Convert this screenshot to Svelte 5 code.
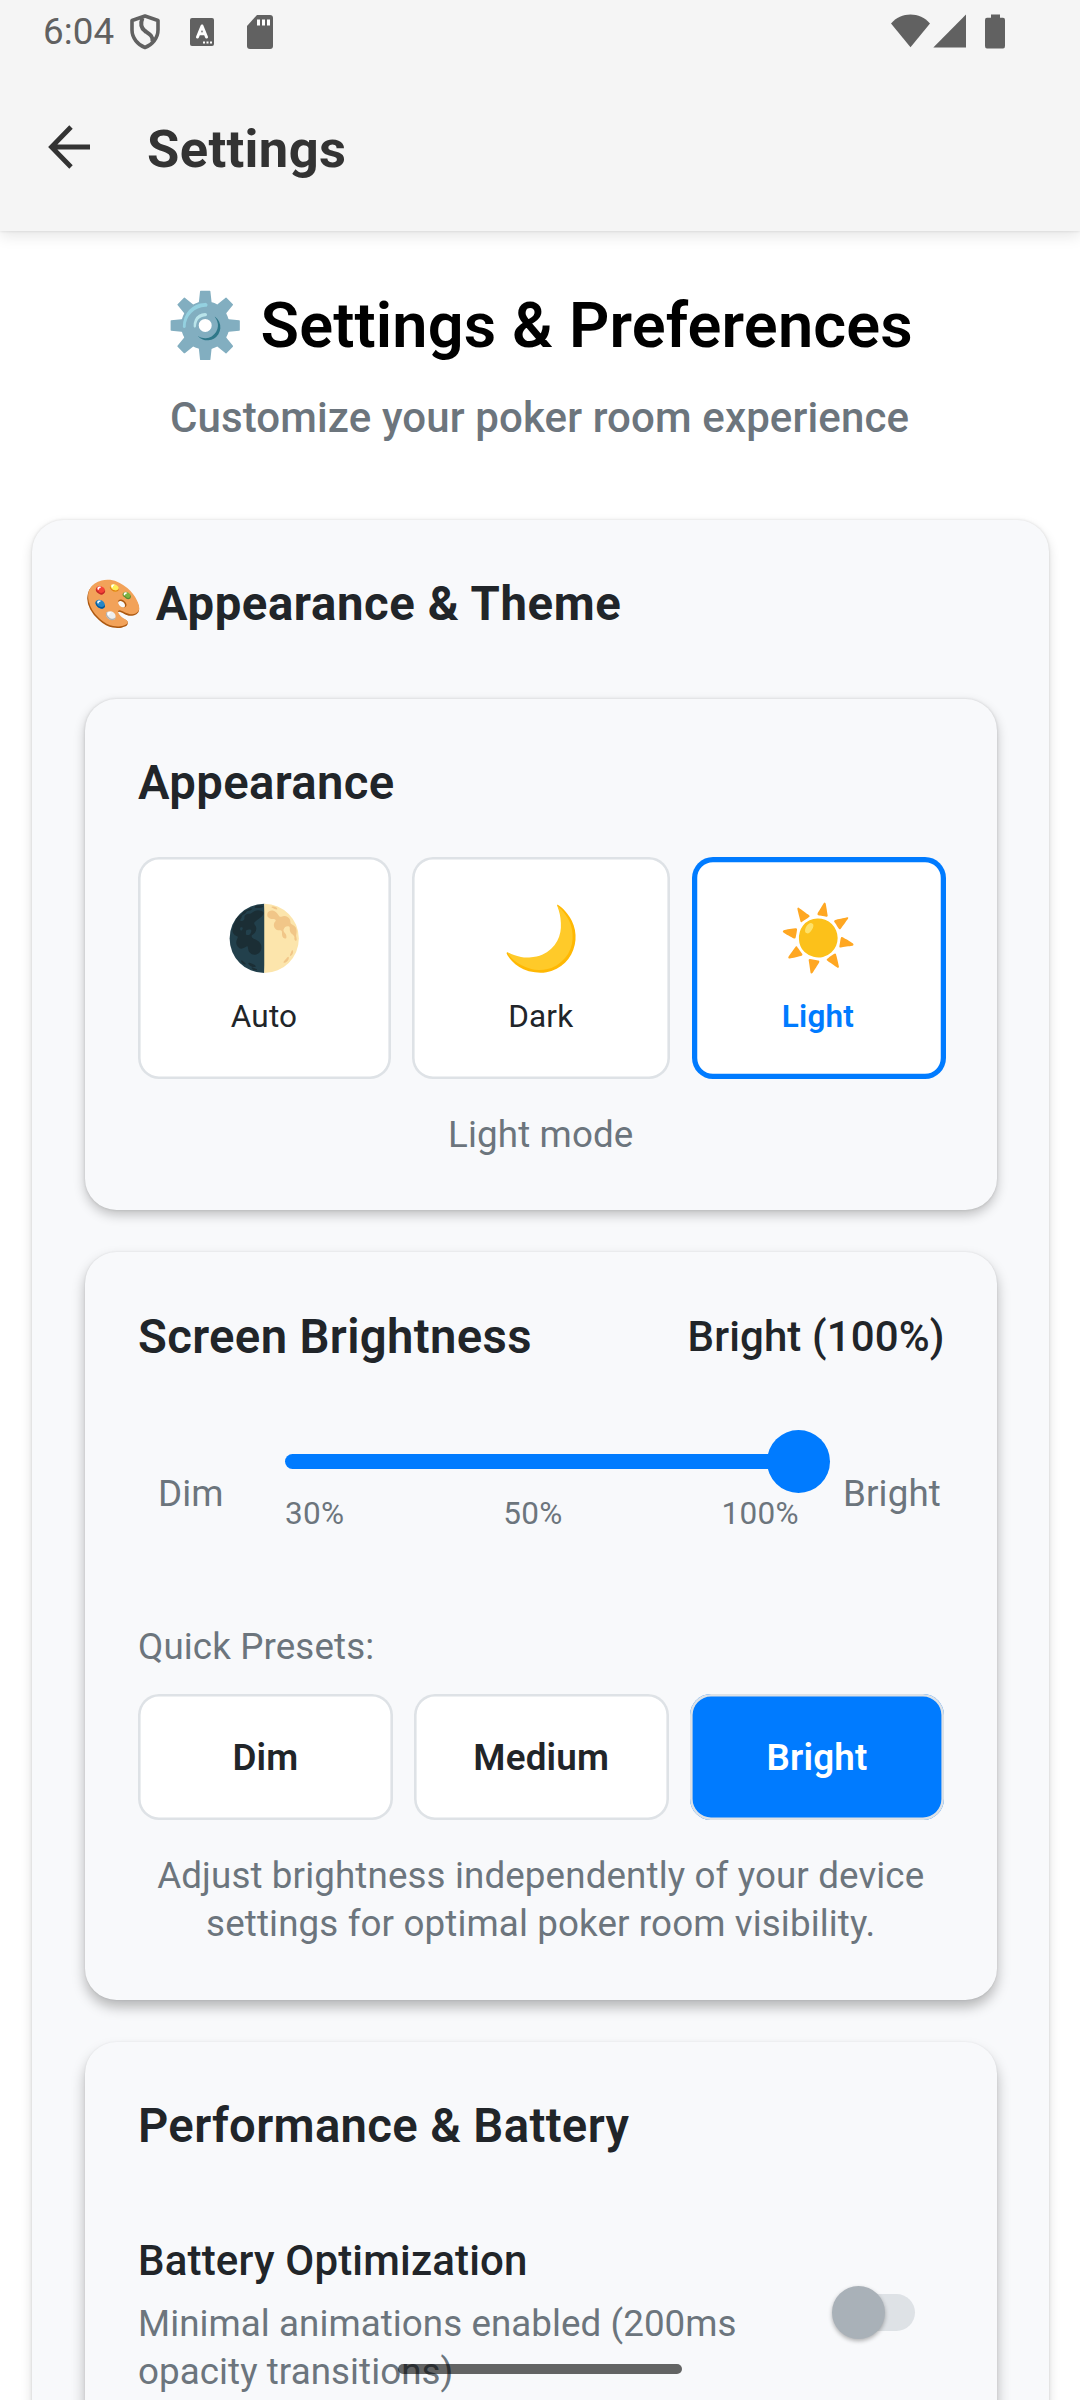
<script>
  const modes = [
    { label: 'Auto', icon: '🌓' },
    { label: 'Dark', icon: '🌙' },
    { label: 'Light', icon: '☀️' }
  ];
  const presets = ['Dim', 'Medium', 'Bright'];
  let mode = $state('Light');
  let preset = $state('Bright');
</script>

<div class="screen">
  <header>
    <div class="status">
      <span class="clock">6:04</span>
      <svg class="shield" viewBox="0 0 30 36" width="30" height="36">
        <path d="M15 2 L28 6.5 V16 C28 24 22 31 15 33.5 C8 31 2 24 2 16 V6.5 Z" fill="none" stroke="#616161" stroke-width="3.6" stroke-linejoin="round" />
        <path d="M12.5 4 C10 10 11 14 15 17 C20 20.500 23 22 22.500 27.500" fill="none" stroke="#616161" stroke-width="4" />
      </svg>
      <svg class="letter" viewBox="0 0 24 28" width="24" height="28">
        <rect width="24" height="28" rx="2" fill="#616161" />
        <path d="M7.500 19 L12 8 L16.500 19 M9 15.800 H15" fill="none" stroke="#fff" stroke-width="3" stroke-linecap="round" stroke-linejoin="round" />
        <path d="M13 23.500h2v2h-2z M16.500 23.500h2v2h-2z M20 23.500h2v2h-2z" fill="#fff" />
      </svg>
      <svg class="card-icon" viewBox="0 0 26 34" width="26" height="34">
        <path d="M10 0 H23 Q26 0 26 3 V31 Q26 34 23 34 H3 Q0 34 0 31 V11 Z" fill="#616161" />
        <path d="M10 4.500h3v6h-3z M15 4.500h3v6h-3z M20 4.500h3v6h-3z" fill="#fff" />
      </svg>
      <svg class="signals" viewBox="0 0 115 36" width="115" height="36">
        <path d="M0 9.500 C10 -2.500 29 -2.500 39 9.500 L19.500 33.300 Z" fill="#616161" />
        <path d="M42.300 33.500 L75 0.500 V33.500 Z" fill="#616161" />
        <path d="M100 0.500 H109 V3.800 H112 Q114 3.800 114 6 V32 Q114 34.500 112 34.500 H96 Q94 34.500 94 32 V6 Q94 3.800 96 3.800 H100 Z" fill="#616161" />
      </svg>
    </div>
    <div class="toolbar">
      <svg viewBox="0 0 42 44" width="42" height="44">
        <path d="M42 22 H4 M23 2 L3.500 22 L23 42" fill="none" stroke="#333" stroke-width="4.800" />
      </svg>
      <h1>Settings</h1>
    </div>
  </header>

  <main>
    <h2><span class="emoji">⚙️</span> Settings &amp; Preferences</h2>
    <p class="subtitle">Customize your poker room experience</p>

    <section class="group">
      <h3 class="group-title"><span class="emoji">🎨</span> Appearance &amp; Theme</h3>

      <div class="card first">
        <h3>Appearance</h3>
        <div class="modes">
          {#each modes as m}
            <button class="mode" class:active={mode === m.label} onclick={() => (mode = m.label)}>
              <span class="mode-icon">{m.icon}</span>
              <span class="mode-label">{m.label}</span>
            </button>
          {/each}
        </div>
        <p class="mode-note">{mode} mode</p>
      </div>

      <div class="card second">
        <div class="card-head">
          <h3>Screen Brightness</h3>
          <span class="value">Bright (100%)</span>
        </div>
        <div class="slider-row">
          <span class="end dim">Dim</span>
          <div class="slider">
            <div class="rail"><div class="track"></div><div class="thumb"></div></div>
            <div class="ticks"><span>30%</span><span>50%</span><span>100%</span></div>
          </div>
          <span class="end">Bright</span>
        </div>
        <p class="presets-label">Quick Presets:</p>
        <div class="presets">
          {#each presets as p}
            <button class="preset" class:active={preset === p} onclick={() => (preset = p)}>{p}</button>
          {/each}
        </div>
        <p class="hint">Adjust brightness independently of your device<br />settings for optimal poker room visibility.</p>
      </div>

      <div class="card third">
        <h3>Performance &amp; Battery</h3>
        <div class="setting">
          <div>
            <p class="setting-name">Battery Optimization</p>
            <p class="setting-desc">Minimal animations enabled (200ms<br />opacity transitions)</p>
          </div>
          <div class="switch"><div class="knob"></div></div>
        </div>
      </div>
    </section>
  </main>
  <div class="gesture"></div>
</div>

<style>
  :global(body) { margin: 0; background: #fff; }
  .screen {
    position: relative;
    width: 1080px;
    height: 2400px;
    overflow: hidden;
    background: #fff;
    color: #212529;
    font-family: Roboto, 'Noto Color Emoji', sans-serif;
    letter-spacing: 0.12px;
  }
  h1, h2, h3, p { margin: 0; }
  button { font-family: inherit; letter-spacing: 0.2px; border: 0; padding: 0; color: inherit; }

  header {
    height: 231px;
    background: #f5f5f5;
    box-shadow: 0 0 3px rgba(0, 0, 0, 0.12), 0 5px 14px rgba(0, 0, 0, 0.1);
  }
  .status { display: flex; height: 63px; padding-left: 43px; align-items: flex-start; }
  .clock { width: 86.500px; font-size: 36.75px; line-height: 63px; color: #616161; }
  .shield { margin-top: 13.500px; }
  .letter { margin: 18px 0 0 30px; }
  .card-icon { margin: 15px 0 0 33px; }
  .signals { margin: 13.500px 0 0 618px; }
  .toolbar { display: flex; align-items: center; height: 168px; padding-left: 48px; }
  h1 { margin: 3px 0 0 57px; font-size: 52.5px; line-height: 60px; font-weight: 700; letter-spacing: 0.35px; color: #333; }

  h2 { margin-top: 57.500px; text-align: center; font-size: 63px; line-height: 74px; font-weight: 600; letter-spacing: 0.15px; color: #000; }
  h2 .emoji { margin-left: -1px; }
  .subtitle { margin: 30px 1px 0 0; text-align: center; font-size: 42px; line-height: 50px; font-weight: 500; color: #6c757d; }

  .group {
    height: 1960px;
    margin: 77px 31px 0 31.5px;
    padding: 56px 52.5px 0 53.5px;
    border-radius: 31.5px;
    background: #f8f9fb;
    box-shadow: 0 0 3px rgba(0, 0, 0, 0.13), 0 5px 12px rgba(0, 0, 0, 0.14);
  }
  h3 { font-size: 47.25px; line-height: 56px; font-weight: 600; letter-spacing: 0.35px; }
  .group-title { margin-left: -1px; font-weight: 700; letter-spacing: 0.62px; }
  .card {
    box-sizing: border-box;
    margin-bottom: 42px;
    padding: 56px 52px 0 53px;
    border-radius: 31.5px;
    background: #f8f9fb;
  }
  .first { height: 511px; margin-top: 67.500px; box-shadow: 0 0 3px rgba(0, 0, 0, 0.13), 0 5px 12px rgba(0, 0, 0, 0.23); }
  .second { height: 748px; padding-top: 57px; box-shadow: 0 0 2px rgba(0, 0, 0, 0.1), 0 7px 13px rgba(0, 0, 0, 0.28); }
  .third { height: 640px; box-shadow: 0 0 2px rgba(0, 0, 0, 0.08), 0 9px 14px rgba(0, 0, 0, 0.28); }

  .modes { display: grid; grid-template-columns: 253px 258px 254px; justify-content: space-between; margin: 46px -1px 0 0; }
  .mode {
    display: flex;
    flex-direction: column;
    align-items: center;
    height: 222px;
    padding-top: 45px;
    border-radius: 21px;
    background: #fff;
    box-shadow: inset 0 0 0 2.600px #dee2e6;
  }
  .mode.active { box-shadow: inset 0 0 0 5.250px #007bff; }
  .mode-icon { height: 74px; font-size: 63px; line-height: 74px; }
  .mode-label { margin: 22px 1px 0 0; font-size: 31.5px; line-height: 38px; }
  .active .mode-label { font-weight: 600; color: #007bff; }
  .mode-note { margin: 34px 1px 0 0; text-align: center; font-size: 36.75px; line-height: 44px; color: #6c757d; }

  .card-head { display: flex; justify-content: space-between; align-items: center; }
  .value { font-size: 42px; line-height: 56px; font-weight: 500; }
  .slider-row { display: flex; height: 102px; margin-top: 65px; }
  .end { padding-top: 42px; font-size: 36.75px; line-height: 44px; color: #6c757d; }
  .dim { width: 127px; padding-left: 20px; }
  .slider { width: 513px; margin-right: 45px; }
  .rail { position: relative; display: flex; align-items: center; height: 63px; }
  .track { width: 100%; height: 15px; border-radius: 8px; background: #007bff; }
  .thumb { position: absolute; right: -31.500px; width: 63px; height: 63px; border-radius: 50%; background: #007bff; }
  .ticks { display: flex; justify-content: space-between; margin-right: -1px; padding-top: 2px; font-size: 31.5px; line-height: 38px; letter-spacing: 0.35px; color: #6c757d; }
  .presets-label { margin-top: 93px; font-size: 36.75px; line-height: 44px; color: #6c757d; }
  .presets { display: grid; grid-template-columns: repeat(3, 1fr); gap: 21px; margin-top: 25px; }
  .preset {
    height: 126px;
    padding-top: 2px;
    border-radius: 21px;
    background: #fff;
    box-shadow: inset 0 0 0 2.600px #dee2e6;
    font-size: 36.75px;
    line-height: 44px;
    font-weight: 600;
  }
  .preset.active { background: #007bff; color: #fff; }
  .hint { margin: 32px 1px 0 0; text-align: center; font-size: 36.75px; line-height: 48.200px; color: #6c757d; }

  .setting { display: flex; justify-content: space-between; margin-top: 82px; }
  .setting-name { font-size: 42px; line-height: 50px; font-weight: 500; letter-spacing: 0.18px; }
  .setting-desc { margin-top: 14px; font-size: 36.75px; line-height: 48.200px; letter-spacing: 0.06px; color: #6c757d; }
  .switch { width: 75px; height: 37px; margin: 58px 30px 0 0; border-radius: 19px; background: #dee2e6; }
  .knob {
    width: 53px;
    height: 53px;
    margin: -8px 0 0 -8px;
    border-radius: 50%;
    background: #a9b1b8;
    box-shadow: 0 2px 4px rgba(0, 0, 0, 0.3);
  }
  .gesture {
    position: absolute;
    left: 398px;
    bottom: 26px;
    width: 284px;
    height: 10px;
    border-radius: 5px;
    background: rgba(0, 0, 0, 0.6);
  }
</style>
